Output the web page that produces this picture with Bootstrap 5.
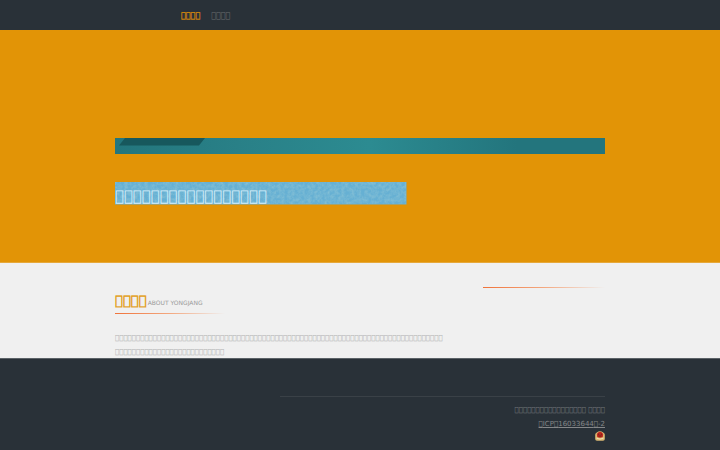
<!DOCTYPE html>
<html lang="zh">
<head>
  <meta charset="UTF-8">
  <meta name="viewport" content="width=device-width, initial-scale=1.0">
  <title>YONGJANG</title>
  <link rel="stylesheet" href="https://cdn.jsdelivr.net/npm/bootstrap@5.3.0/dist/css/bootstrap.min.css">
  <style>
    body {
      font-family: "DejaVu Sans", sans-serif;
      font-size: 7px;
      line-height: 14px;
      background: #293138;
      overflow: hidden;
      text-rendering: geometricPrecision;
    }
    .page-wrap { width: 490px; }
    .top-bar { height: 30px; background: #293138; }
    .top-menu { gap: 11px; padding: 1px 0 0 66px; font-size: 8px; }
    .top-menu a { color: #6b6e70; text-decoration: none; }
    .top-menu a.current { color: #e29406; -webkit-text-stroke: .2px; }
    .hero { height: 233px; padding-top: 108px; background: #e29406; border-bottom: 1px solid #e6a83a; }
    .teal-strip {
      height: 16px;
      background: linear-gradient(90deg, #23767d, #298087 25%, #2c8b91 52%, #23757d 82%, #23757d);
    }
    .teal-strip svg, .blue-strip svg { display: block; }
    .blue-strip { width: 291.5px; height: 23px; margin-top: 28px; display: grid; }
    .blue-strip > * { grid-area: 1 / 1; }
    .blue-text { font-size: 14.9px; line-height: 28px; height: 23px; color: #d5eefa; white-space: nowrap; }
    .about { height: 95px; background: #f0f0f0; color: #b0b0b0; }
    .about-side { width: 122px; padding-top: 24px; }
    .about-title { height: 15px; margin-top: 31px; line-height: 15px; font-size: 6px; color: #999; }
    .about-title .boxes { font-size: 13.2px; margin-right: 1px; color: #e29a10; -webkit-text-stroke: .4px; }
    .fade-rule { height: 1px; background: linear-gradient(90deg, #f0733a, #f3a880 50%, #f0f0f0); }
    .about-title + .fade-rule { width: 110px; margin-top: 4px; }
    .about-text { margin-top: 17px; white-space: nowrap; }
    .foot { height: 92px; padding-top: 37px; background: #293138; border-top: 1px solid #5b6267; color: #73777a; }
    .foot-inner { width: 325px; padding-top: 6px; border-top: 1px solid #3a4147; }
    .foot a { color: #858789; }
    .foot svg { display: block; margin-left: auto; }
  </style>
</head>
<body>
  <header class="top-bar">
    <nav class="page-wrap mx-auto h-100 d-flex align-items-center top-menu">
      <a href="#" class="current"><span class="boxes" data-count="4"></span></a>
      <a href="#"><span class="boxes" data-count="4"></span></a>
    </nav>
  </header>

  <section class="hero">
    <div class="page-wrap mx-auto">
      <div class="teal-strip">
        <svg width="90" height="8"><path d="M10 0H90L84 7.5H4Z" fill="#17585d"/></svg>
      </div>
      <div class="blue-strip">
        <svg width="292" height="23">
          <filter id="grain" x="0" y="0" width="100%" height="100%">
            <feTurbulence type="fractalNoise" baseFrequency=".3" numOctaves="3" seed="4"/>
            <feColorMatrix values="0 0 0 0 .3  0 0 0 0 .58  0 0 0 0 .68  1.1 0 0 0 -.35"/>
          </filter>
          <rect width="291.5" height="22.5" fill="#66b0d3"/>
          <rect width="291" height="22" filter="url(#grain)"/>
        </svg>
        <div class="blue-text"><span class="boxes" data-count="17"></span></div>
      </div>
    </div>
  </section>

  <main class="about">
    <div class="page-wrap mx-auto d-flex justify-content-between">
      <div>
        <div class="about-title"><span class="boxes" data-count="4"></span>ABOUT YONGJANG</div>
        <div class="fade-rule"></div>
        <div class="about-text">
          <div class="boxes" data-count="78"></div>
          <div class="boxes" data-count="26"></div>
        </div>
      </div>
      <div class="about-side"><div class="fade-rule"></div></div>
    </div>
  </main>

  <footer class="foot">
    <div class="page-wrap mx-auto">
      <div class="foot-inner ms-auto text-end">
        <div><span class="boxes" data-count="17"></span> <span class="boxes" data-count="4"></span></div>
        <div><a href="#"><span class="boxes" data-count="1"></span>ICP<span class="boxes" data-count="1"></span>16033644<span class="boxes" data-count="1"></span>-2</a></div>
        <!-- police record badge -->
        <svg width="10" height="10" viewBox="0 0 10 10">
          <path d="M.2 4.2Q0 2.5 1.8 1.5Q5-1 8.2 1.5Q10 2.5 9.8 4.2V8Q9.8 9.5 8 9.7H2Q.2 9.5.2 8Z" fill="#d9b873"/>
          <path d="M1.8 3Q5-1.5 8.2 3L7.8 6Q5 7.5 2.2 6Z" fill="#c4281f"/>
          <path d="M3 3.2H4.3M5.7 3.2H7M3.4 5H6.6" stroke="#542318" stroke-width=".8"/>
          <path d="M1.5 7.2Q5 9 8.5 7.2" fill="none" stroke="#f3e2ac" stroke-width="1"/>
        </svg>
      </div>
    </div>
  </footer>
  <script src="https://cdn.jsdelivr.net/npm/bootstrap@5.3.0/dist/js/bootstrap.bundle.min.js"></script>
  <script>
    // Fill each run with empty box characters
    document.querySelectorAll('.boxes').forEach(el => {
      el.textContent = '\ue100'.repeat(el.dataset.count);
    });
  </script>
</body>
</html>
